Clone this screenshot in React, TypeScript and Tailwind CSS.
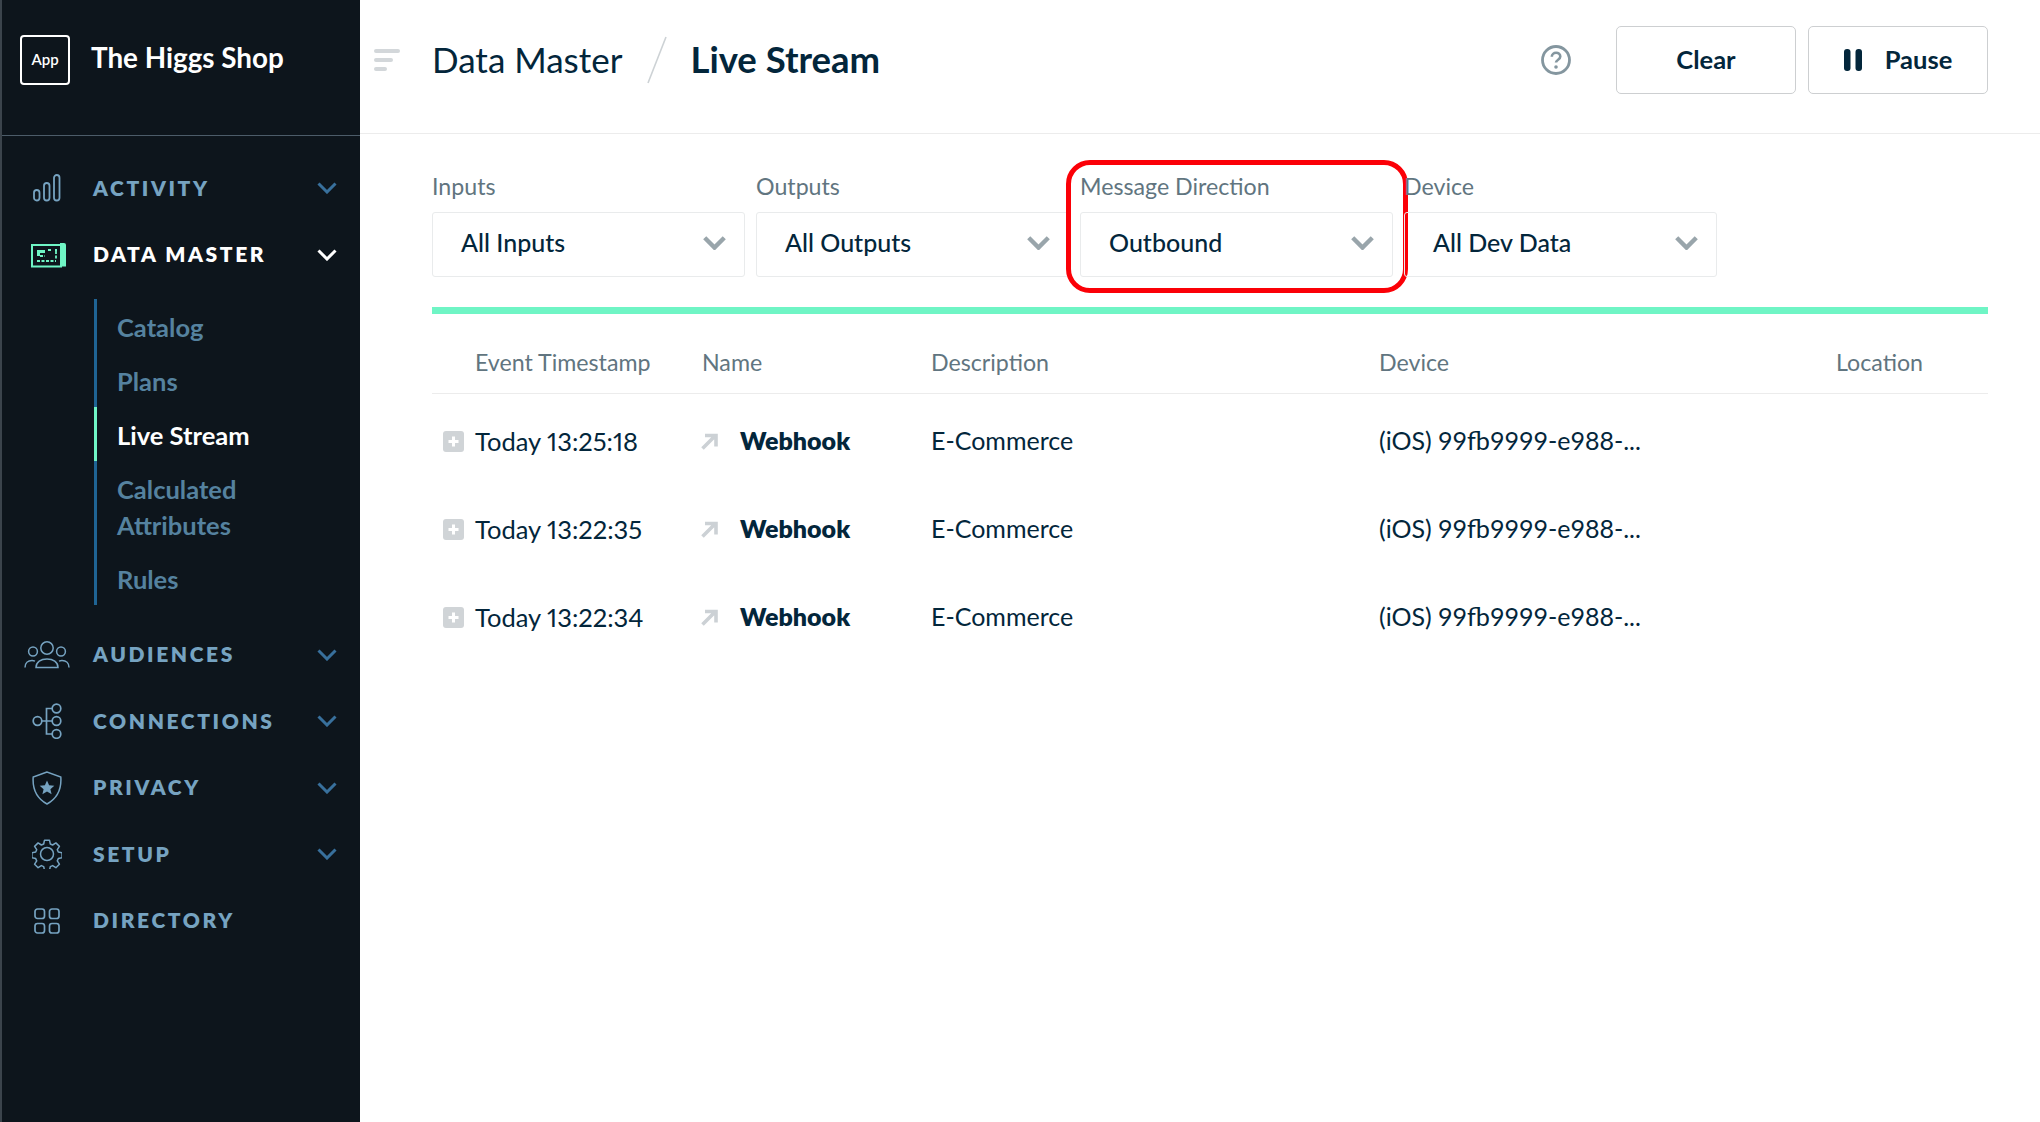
const font = { fontFamily: "Lato, 'Open Sans', sans-serif" }

function Chevron({ className, weight = 3 }: { className: string; weight?: number }) {
  return (
    <svg viewBox="0 0 20 12" fill="none" className={className}>
      <path d="M1.500 1.500 10 10l8.500-8.500" stroke="currentColor" strokeWidth={weight} />
    </svg>
  )
}

function ActivityIcon() {
  return (
    <svg viewBox="0 0 28 28" fill="none" stroke="currentColor" strokeWidth="1.800" className="w-[28px] h-[28px]">
      <rect x="1" y="16" width="5.500" height="10.500" rx="2.750" />
      <rect x="11" y="9" width="5.500" height="17.500" rx="2.750" />
      <rect x="21" y="1" width="5.500" height="25.500" rx="2.750" />
    </svg>
  )
}

function DataMasterIcon() {
  return (
    <svg viewBox="0 0 36 26" fill="none" className="w-[36px] h-[26px] ml-[4px] text-[#6ff5c5]">
      <path d="M1 3h29v21.500H1z" stroke="currentColor" strokeWidth="2" />
      <path d="M29 1h4a2 2 0 0 1 2 2v21.500h-6z" fill="currentColor" />
      <path d="M6 8h8v3H9v3H6z" fill="currentColor" />
      <path d="M17 8h4M24 8h2M25 9v8M6 19h19M9 14h5" stroke="currentColor" strokeWidth="1.800" strokeDasharray="3 1.500" />
    </svg>
  )
}

function AudiencesIcon() {
  return (
    <svg viewBox="0 0 46 28" fill="none" stroke="currentColor" strokeWidth="1.500" className="w-[46px] h-[28px]">
      <circle cx="23" cy="7" r="6.200" />
      <circle cx="9" cy="10.500" r="4.400" />
      <circle cx="37" cy="10.500" r="4.400" />
      <path d="M12 26.500c0-5.500 5-8.500 11-8.500s11 3 11 8.500z" />
      <path d="M1 26.500c0-4.500 3-7 7-7 1 0 2 .2 3 .6M45 26.500c0-4.500-3-7-7-7-1 0-2 .2-3 .6" />
    </svg>
  )
}

function ConnectionsIcon() {
  return (
    <svg viewBox="0 0 30 36" fill="none" stroke="currentColor" strokeWidth="1.700" className="w-[30px] h-[36px]">
      <circle cx="5.500" cy="18" r="4.300" />
      <circle cx="24.500" cy="5.500" r="4.300" />
      <circle cx="24.500" cy="18" r="4.300" />
      <circle cx="24.500" cy="31" r="4.300" />
      <path d="M10 18h10M20 5.500h-5.500v25.500H20" />
    </svg>
  )
}

function PrivacyIcon() {
  return (
    <svg viewBox="0 0 30 34" fill="none" className="w-[30px] h-[34px]">
      <path d="M15 1 1.200 6c-.8 11 3 21 13.800 27C25.800 27 29.600 17 28.800 6z" stroke="currentColor" strokeWidth="1.500" />
      <path d="m15 9.500 2.100 4.800 5.200.5-3.900 3.400 1.200 5.100-4.600-2.700-4.600 2.700 1.200-5.100-3.900-3.400 5.200-.5z" fill="currentColor" />
    </svg>
  )
}

function SetupIcon() {
  return (
    <svg viewBox="0 0 30 30" fill="none" stroke="currentColor" strokeWidth="1.500" className="w-[30px] h-[30px]">
      <path d="m12.500 1.200h5l.8 3.800 2.300 1 3.300-2.100 3.500 3.500-2.100 3.300 1 2.300 3.800.8v5l-3.800.8-1 2.300 2.100 3.300-3.500 3.500-3.300-2.100-2.300 1-.8 3.800h-5l-.8-3.800-2.300-1-3.300 2.100-3.500-3.500 2.100-3.300-1-2.300-3.800-.8v-5l3.800-.8 1-2.300-2.100-3.300 3.500-3.500 3.300 2.100 2.300-1z" strokeLinejoin="round" />
      <circle cx="15" cy="15" r="6.500" />
    </svg>
  )
}

function DirectoryIcon() {
  return (
    <svg viewBox="0 0 26 26" fill="none" stroke="currentColor" strokeWidth="1.700" className="w-[26px] h-[26px]">
      <rect x="1" y="1" width="9.500" height="9.500" rx="2.500" />
      <rect x="15.500" y="1" width="9.500" height="9.500" rx="2.500" />
      <rect x="1" y="15.500" width="9.500" height="9.500" rx="2.500" />
      <rect x="15.500" y="15.500" width="9.500" height="9.500" rx="2.500" />
    </svg>
  )
}

function NavRow({ icon, label, active, noChevron }: { icon: React.ReactNode; label: string; active?: boolean; noChevron?: boolean }) {
  return (
    <div className={`flex items-center h-[66.4px] pr-[23px] ${active ? 'text-white' : 'text-[#76a3c1]'}`}>
      <div className="w-[91px] flex justify-center pr-[2px] shrink-0">{icon}</div>
      <span className="flex-1 text-[21px] leading-none font-extrabold tracking-[2.600px] pb-[2px]">{label}</span>
      {!noChevron && <Chevron className={`w-[20px] h-[12px] ${active ? 'text-white' : 'text-[#38709c]'}`} />}
    </div>
  )
}

const subItems = ['Catalog', 'Plans', 'Live Stream', 'Calculated Attributes', 'Rules']

function Sidebar() {
  return (
    <aside className="w-[360px] shrink-0 bg-[#0d151c] border-l-2 border-[#3b444c] flex flex-col">
      <div className="h-[136px] border-b border-[#4c5c69] flex items-center pl-[18px] pb-[16px] shrink-0">
        <div className="w-[50px] h-[50px] rounded-[4px] border-2 border-white flex items-center justify-center text-white text-[15px] font-semibold">
          App
        </div>
        <span className="ml-[21px] mb-[3px] text-white text-[27.800px] font-bold">The Higgs Shop</span>
      </div>
      <div className="pt-[19px]">
        <NavRow icon={<ActivityIcon />} label="ACTIVITY" />
        <NavRow icon={<DataMasterIcon />} label="DATA MASTER" active />
        <div className="mt-[11px] mb-[17px] ml-[92px] w-[190px] flex flex-col text-[25.500px] leading-[36px] font-bold text-[#55829f]">
          {subItems.map((item) => (
            <div
              key={item}
              className={`border-l-[3px] pl-[20px] pt-[10px] pb-[8px] ${item === 'Live Stream' ? 'border-[#6ff5c5] text-white' : 'border-[#1f6494]'}`}
            >
              {item}
            </div>
          ))}
        </div>
        <NavRow icon={<AudiencesIcon />} label="AUDIENCES" />
        <NavRow icon={<ConnectionsIcon />} label="CONNECTIONS" />
        <NavRow icon={<PrivacyIcon />} label="PRIVACY" />
        <NavRow icon={<SetupIcon />} label="SETUP" />
        <NavRow icon={<DirectoryIcon />} label="DIRECTORY" noChevron />
      </div>
    </aside>
  )
}

function Header() {
  return (
    <header className="h-[134px] shrink-0 border-b border-[#ececec] flex items-center pl-[14px] pr-[52px] pb-[14px]">
      <div className="flex flex-col gap-[5px] w-[26px] mr-[32px]">
        <div className="h-[4px] w-[26px] rounded-full bg-[#d3d7da]" />
        <div className="h-[4px] w-[19px] rounded-full bg-[#d3d7da]" />
        <div className="h-[4px] w-[13px] rounded-full bg-[#d3d7da]" />
      </div>
      <span className="text-[35px] text-[#03263b]">Data Master</span>
      <svg viewBox="0 0 22 48" className="w-[22px] h-[48px] ml-[24px] mr-[22px]" fill="none">
        <path d="M20 1 2 47" stroke="#cdd2d5" strokeWidth="1.600" />
      </svg>
      <span className="text-[36.500px] font-bold text-[#03263b]">Live Stream</span>
      <div className="flex-1" />
      <svg viewBox="0 0 30 30" fill="none" className="w-[30px] h-[30px] mr-[45px] text-[#84969f]">
        <circle cx="15" cy="15" r="13.500" stroke="currentColor" strokeWidth="2.800" />
        <path d="M10.800 11.800c0-2.500 2-4 4.300-4s4.200 1.500 4.200 3.800c0 3.200-4.300 3-4.300 6" stroke="currentColor" strokeWidth="2.600" />
        <circle cx="15" cy="22" r="1.800" fill="currentColor" />
      </svg>
      <button className="w-[180px] h-[68px] rounded-[5px] border border-[#cdcfd1] text-[25.500px] font-bold text-[#03263b] mr-[12px]">
        Clear
      </button>
      <button className="w-[180px] h-[68px] rounded-[5px] border border-[#cdcfd1] text-[25.500px] font-bold text-[#03263b] flex items-center justify-center gap-[23px]">
        <svg viewBox="0 0 18 22" className="w-[18px] h-[22px]">
          <rect x="0" y="0" width="6.500" height="22" rx="3" fill="currentColor" />
          <rect x="11.500" y="0" width="6.500" height="22" rx="3" fill="currentColor" />
        </svg>
        Pause
      </button>
    </header>
  )
}

function Filter({ label, value, highlighted }: { label: string; value: string; highlighted?: boolean }) {
  return (
    <div className="relative w-[313px]">
      <div className="text-[23.200px] leading-[28px] text-[#617580] mb-[12px]">{label}</div>
      <div className="h-[65px] rounded-[3px] border border-[#e9ebec] flex items-center justify-between pl-[28px] pr-[18px] pb-[3px]">
        <span className="text-[25px] font-medium text-[#03263b]">{value}</span>
        <Chevron className="w-[23px] h-[14px] text-[#99a5ab]" weight={3.800} />
      </div>
      {highlighted && (
        <div className="absolute -left-[14px] -right-[15px] -top-[12px] -bottom-[16px] rounded-[24px] border-[5px] border-[#fb0007]" />
      )}
    </div>
  )
}

const rows = ['Today 13:25:18', 'Today 13:22:35', 'Today 13:22:34']
const gridCols = 'grid grid-cols-[270px_229px_448px_457px_1fr]'

function PlusBox() {
  return (
    <div className="w-[21px] h-[21px] rounded-[3px] bg-[#d0d4d7] flex items-center justify-center shrink-0">
      <svg viewBox="0 0 11 11" className="w-[11px] h-[11px]" fill="none">
        <path d="M5.500 0.500v10M0.500 5.500h10" stroke="#fff" strokeWidth="3" />
      </svg>
    </div>
  )
}

function OutArrow() {
  return (
    <svg viewBox="0 0 17 17" fill="none" className="w-[17px] h-[17px] -ml-[1px] shrink-0">
      <path d="M1.500 15.500 13 4M4 2.500h11v11" stroke="#ccd1d5" strokeWidth="3.600" />
    </svg>
  )
}

function Stream() {
  return (
    <div className="pl-[72px] pr-[52px] pt-[38px]">
      <div className="flex gap-[11px]">
        <Filter label="Inputs" value="All Inputs" />
        <Filter label="Outputs" value="All Outputs" />
        <Filter label="Message Direction" value="Outbound" highlighted />
        <Filter label="Device" value="All Dev Data" />
      </div>
      <div className="h-[7px] bg-[#6ff5c5] mt-[30px]" />
      <div className={`${gridCols} h-[80px] items-center border-b border-[#ececec] text-[23.200px] text-[#617580] pt-[18px] mb-[3px]`}>
        <div className="pl-[43px]">Event Timestamp</div>
        <div>Name</div>
        <div>Description</div>
        <div>Device</div>
        <div>Location</div>
      </div>
      {rows.map((time) => (
        <div key={time} className={`${gridCols} h-[88px] items-center text-[25px] text-[#03263b]`}>
          <div className="flex items-center gap-[11px] pl-[11px] proportional-nums text-[25.500px]">
            <PlusBox />
            {time}
          </div>
          <div className="flex items-center gap-[22px]">
            <OutArrow />
            <span className="font-extrabold">Webhook</span>
          </div>
          <div>E-Commerce</div>
          <div>(iOS) 99fb9999-e988-...</div>
          <div />
        </div>
      ))}
    </div>
  )
}

export default function App() {
  return (
    <div className="flex h-screen bg-white overflow-hidden" style={font}>
      <Sidebar />
      <main className="flex-1 flex flex-col min-w-0">
        <Header />
        <Stream />
      </main>
    </div>
  )
}
